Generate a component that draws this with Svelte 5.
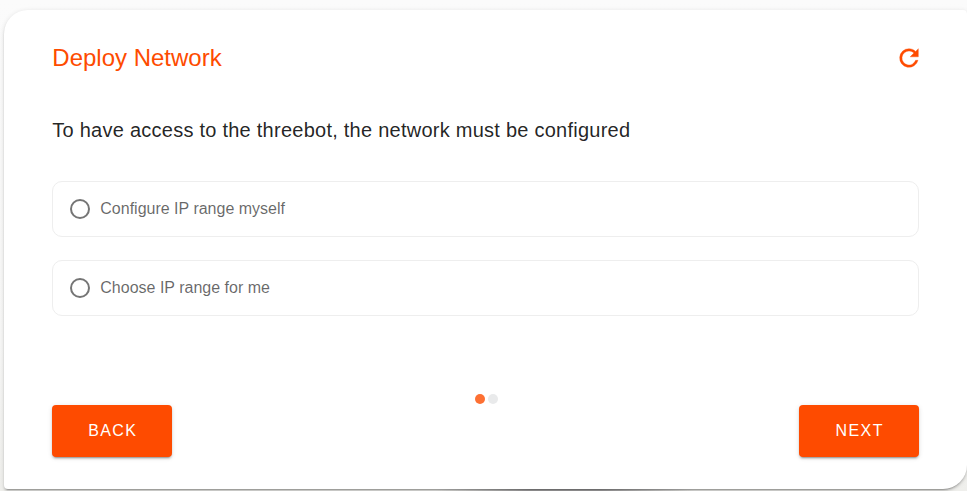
<script>
  const options = ['Configure IP range myself', 'Choose IP range for me'];
  const steps = [0, 1];
  let selected = $state(null);
  let current = $state(0);
</script>

<main class="backdrop">
  <section class="card">
    <header>
      <h1>Deploy Network</h1>
      <button class="refresh" aria-label="Refresh">
        <svg viewBox="0 0 24 24" width="28" height="28">
          <path d="M17.65 6.35C16.2 4.9 14.21 4 12 4a8 8 0 1 0 7.73 10h-2.08A6 6 0 1 1 12 6c1.66 0 3.14.69 4.22 1.78L13 11h7V4z" />
        </svg>
      </button>
    </header>

    <h2>To have access to the threebot, the network must be configured</h2>

    <div class="options" role="radiogroup">
      {#each options as option, i}
        <button class="option" role="radio" aria-checked={selected === i} onclick={() => (selected = i)}>
          <svg viewBox="0 0 24 24" width="24" height="24">
            <circle cx="12" cy="12" r="9" fill="none" stroke="currentColor" stroke-width="2" />
            {#if selected === i}<circle cx="12" cy="12" r="5" />{/if}
          </svg>
          <span>{option}</span>
        </button>
      {/each}
    </div>

    <footer>
      <button class="action" onclick={() => (current = 0)}>BACK</button>
      <div class="dots">
        {#each steps as step}
          <span class="dot" class:active={step === current}></span>
        {/each}
      </div>
      <button class="action" onclick={() => (current = 1)}>NEXT</button>
    </footer>
  </section>
</main>

<style>
  :global(body) {
    overflow: hidden;
  }
  .backdrop {
    box-sizing: border-box;
    height: 491px;
    padding: 10px 0 2px 4px;
    font-family: 'Liberation Sans', Arial, sans-serif;
    background:
      radial-gradient(ellipse 130px 8px at 565px 491px, #a5a4a5 30%, transparent),
      linear-gradient(#fbfbfb, #f7f7f6 70%, #efefec);
  }
  .card {
    box-sizing: border-box;
    display: flex;
    flex-direction: column;
    height: 479px;
    padding: 32px 47.8px 32px 48.3px;
    background: #fff;
    border-radius: 24px 4px;
    box-shadow:
      0 3px 1px -2px rgba(0, 0, 0, 0.2),
      0 2px 2px 0 rgba(0, 0, 0, 0.14),
      0 1px 5px 0 rgba(0, 0, 0, 0.12);
  }
  header {
    display: flex;
    align-items: center;
    justify-content: space-between;
    height: 32px;
    color: #fe4b00;
  }
  h1,
  h2 {
    margin: 0;
    font-weight: 400;
    line-height: 32px;
  }
  h1 {
    font-size: 24px;
  }
  h2 {
    margin-top: 40px;
    font-size: 20px;
    letter-spacing: 0.25px;
    color: rgba(0, 0, 0, 0.87);
  }
  button {
    padding: 0;
    border: 0;
    font: inherit;
    color: inherit;
    background: none;
    cursor: pointer;
  }
  svg {
    display: block;
    flex: none;
    fill: currentColor;
  }
  .refresh {
    margin: 0 -3.5px 1px 0;
  }
  .refresh svg {
    stroke: currentColor;
    stroke-width: 0.3;
  }
  .options {
    display: flex;
    flex-direction: column;
    gap: 23px;
    margin-top: 35px;
  }
  .option {
    box-sizing: border-box;
    display: flex;
    align-items: center;
    gap: 8px;
    height: 56px;
    padding: 0 15px;
    border: 1px solid #eee;
    border-radius: 10px;
    font-size: 16px;
    color: rgba(0, 0, 0, 0.6);
  }
  .option svg {
    color: #757575;
  }
  footer {
    display: flex;
    align-items: flex-end;
    justify-content: space-between;
    margin-top: auto;
  }
  .action {
    width: 120px;
    height: 52px;
    border-radius: 4px;
    font-size: 16px;
    letter-spacing: 1.43px;
    text-indent: 1px;
    color: #fff;
    background: #fe4b00;
    box-shadow:
      0 3px 1px -2px rgba(0, 0, 0, 0.2),
      0 2px 2px 0 rgba(0, 0, 0, 0.14),
      0 1px 5px 0 rgba(0, 0, 0, 0.12);
  }
  .dots {
    display: flex;
    gap: 3px;
    padding: 0 0 53px 1px;
  }
  .dot {
    width: 10px;
    height: 10px;
    border-radius: 50%;
    background: #e9eaeb;
  }
  .dot.active {
    background: #fd7033;
  }
</style>
